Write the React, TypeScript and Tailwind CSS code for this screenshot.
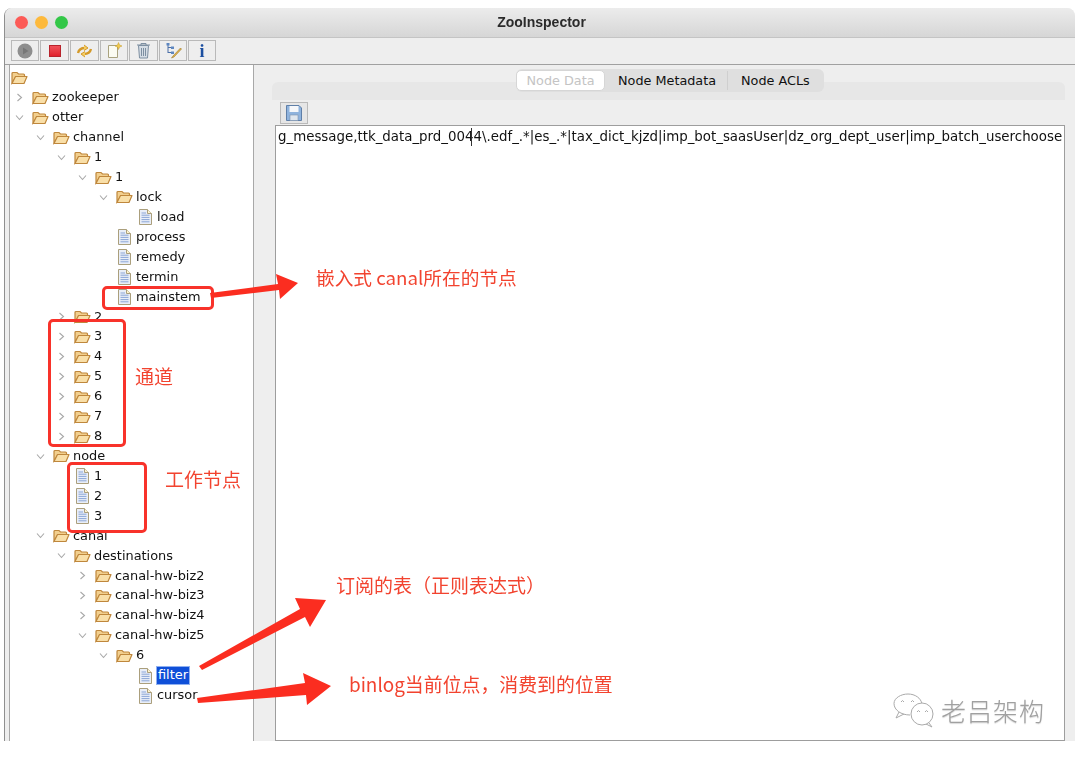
const rows: { depth: number; label: string; kind: 'open' | 'closed' | 'leaf' | 'root'; selected?: boolean }[] = [
  { depth: 0, label: '', kind: 'root' },
  { depth: 1, label: 'zookeeper', kind: 'closed' },
  { depth: 1, label: 'otter', kind: 'open' },
  { depth: 2, label: 'channel', kind: 'open' },
  { depth: 3, label: '1', kind: 'open' },
  { depth: 4, label: '1', kind: 'open' },
  { depth: 5, label: 'lock', kind: 'open' },
  { depth: 6, label: 'load', kind: 'leaf' },
  { depth: 5, label: 'process', kind: 'leaf' },
  { depth: 5, label: 'remedy', kind: 'leaf' },
  { depth: 5, label: 'termin', kind: 'leaf' },
  { depth: 5, label: 'mainstem', kind: 'leaf' },
  { depth: 3, label: '2', kind: 'closed' },
  { depth: 3, label: '3', kind: 'closed' },
  { depth: 3, label: '4', kind: 'closed' },
  { depth: 3, label: '5', kind: 'closed' },
  { depth: 3, label: '6', kind: 'closed' },
  { depth: 3, label: '7', kind: 'closed' },
  { depth: 3, label: '8', kind: 'closed' },
  { depth: 2, label: 'node', kind: 'open' },
  { depth: 3, label: '1', kind: 'leaf' },
  { depth: 3, label: '2', kind: 'leaf' },
  { depth: 3, label: '3', kind: 'leaf' },
  { depth: 2, label: 'canal', kind: 'open' },
  { depth: 3, label: 'destinations', kind: 'open' },
  { depth: 4, label: 'canal-hw-biz2', kind: 'closed' },
  { depth: 4, label: 'canal-hw-biz3', kind: 'closed' },
  { depth: 4, label: 'canal-hw-biz4', kind: 'closed' },
  { depth: 4, label: 'canal-hw-biz5', kind: 'open' },
  { depth: 5, label: '6', kind: 'open' },
  { depth: 6, label: 'filter', kind: 'leaf', selected: true },
  { depth: 6, label: 'cursor', kind: 'leaf' },
];

function FolderIcon() {
  return (
    <svg width="17" height="14" viewBox="0 0 17 14" className="shrink-0">
      <path d="M1 12V2.500C1 1.800 1.500 1.500 2 1.500H6L7.500 3H12.500C13 3 13.500 3.400 13.500 4V5.500H5L1 12Z" fill="#f2cf8e" stroke="#bf873c" strokeWidth="1.200" />
      <path d="M1 12.500L4.500 5.500H16L13 12.500H1Z" fill="#f9dfa8" stroke="#bf873c" strokeWidth="1.200" strokeLinejoin="round" />
    </svg>
  );
}

function FileIcon() {
  return (
    <svg width="13" height="16" viewBox="0 0 13 16" className="shrink-0">
      <path d="M0.500 0.500H8.500L12.500 4.500V15.500H0.500V0.500Z" fill="#e9eef8" stroke="#ab9f7c" />
      <path d="M8.500 0.500V4.500H12.500" fill="#fdf3d0" stroke="#ab9f7c" />
      <path d="M2.500 4H7M2.500 6.200H10.500M2.500 8.400H10.500M2.500 10.600H10.500M2.500 12.800H10.500" stroke="#8ba5d6" strokeWidth="1" />
    </svg>
  );
}

function Chevron({ open }: { open: boolean }) {
  return (
    <svg width="9" height="9" viewBox="0 0 9 9" className="shrink-0" fill="none" stroke="#a8a8a8" strokeWidth="1.100">
      {open ? <path d="M1 2.500L4.500 6.500L8 2.500" /> : <path d="M2.500 1L6.500 4.500L2.500 8" />}
    </svg>
  );
}

function TreeRow({ depth, label, kind, selected }: (typeof rows)[number]) {
  const left = 1 + depth * 21;
  return (
    <div className="relative flex h-[19.93px] items-center" style={{ paddingLeft: left }}>
      {(kind === 'open' || kind === 'closed') && (
        <span className="absolute top-[5px]" style={{ left: left - 17 }}>
          <Chevron open={kind === 'open'} />
        </span>
      )}
      {kind === 'leaf' ? (
        <span className="ml-[2px] mr-[5px] flex">
          <FileIcon />
        </span>
      ) : (
        <span className="mr-[3px] flex">
          <FolderIcon />
        </span>
      )}
      {label &&
        (selected ? (
          <span className="-ml-[1px] flex h-[19px] items-center border border-[#8fb0f0] bg-[#0f4fd8] px-[1px] text-white">{label}</span>
        ) : (
          <span>{label}</span>
        ))}
    </div>
  );
}

function ToolButton({ children, w }: { children: React.ReactNode; w: string }) {
  return <div className={`flex h-[21px] items-center justify-center border border-[#b9b9b9] bg-[#eeeeee] ${w}`}>{children}</div>;
}

function Toolbar() {
  return (
    <div className="flex h-[27px] shrink-0 items-start gap-px border-b border-[#a0a0a0] bg-[#eeeeee] pl-[6px] pt-[2px]">
      <ToolButton w="w-[28px]">
        <svg width="16" height="16" viewBox="0 0 16 16">
          <circle cx="8" cy="8" r="7.500" fill="#8e8e8e" />
          <path d="M6 4.500L11.500 8L6 11.500Z" fill="#777777" />
        </svg>
      </ToolButton>
      <ToolButton w="w-[29px]">
        <div className="h-[12px] w-[12px] border border-[#b8242c] bg-gradient-to-b from-[#f0505a] to-[#e0202c]" />
      </ToolButton>
      <ToolButton w="w-[29px]">
        <svg width="17" height="16" viewBox="0 0 17 16" fill="none" stroke="#d49a2a" strokeWidth="2.400">
          <path d="M2 10C3 6 6 5 9 5" />
          <path d="M8 2L12 5L8 7.500" fill="#f4cd63" strokeWidth="1" />
          <path d="M15 6C14 10 11 11 8 11" />
          <path d="M9 8.500L5 11L9 14" fill="#f4cd63" strokeWidth="1" />
        </svg>
      </ToolButton>
      <ToolButton w="w-[28px]">
        <svg width="17" height="17" viewBox="0 0 17 17">
          <path d="M2.500 3.500H11.500V15.500H2.500Z" fill="#fbfbf2" stroke="#a9a27f" />
          <path d="M12.500 0.500L13.500 3L16 4L13.500 5L12.500 7.500L11.500 5L9 4L11.500 3Z" fill="#f2cb4f" stroke="#c49a28" strokeWidth="0.500" />
        </svg>
      </ToolButton>
      <ToolButton w="w-[29px]">
        <svg width="15" height="17" viewBox="0 0 15 17" fill="#d5dde5" stroke="#7d8fa1">
          <path d="M1 3H14M5 3V1.500H10V3" fill="none" />
          <path d="M2.500 3.500H12.500L11.500 16H3.500Z" />
          <path d="M5.500 6V14M7.500 6V14M9.500 6V14" fill="none" />
        </svg>
      </ToolButton>
      <ToolButton w="w-[28px]">
        <svg width="17" height="17" viewBox="0 0 17 17" fill="none">
          <path d="M3 1.500V11M3 5.500H6M3 10.500H6" stroke="#4a6fa8" />
          <rect x="1.500" y="1" width="3" height="2.500" fill="#5d86c0" />
          <rect x="6" y="4.500" width="3" height="2.500" fill="#5d86c0" />
          <rect x="6" y="9.500" width="3" height="2.500" fill="#5d86c0" />
          <path d="M15.500 6L8 14L6.500 16L9 15L16.500 7Z" fill="#e3b34c" stroke="#9a7a2c" strokeWidth="0.600" />
        </svg>
      </ToolButton>
      <ToolButton w="w-[28px]">
        <span className="font-['Liberation_Serif',serif] text-[18px] leading-none font-bold text-[#1c4fa0]">i</span>
      </ToolButton>
    </div>
  );
}

function TreePanel() {
  return (
    <div className="w-[245px] shrink-0 overflow-hidden border-x border-[#a8a8a8] bg-white pt-[3px] font-['DejaVu_Sans',sans-serif] text-[12.900px] leading-none text-[#111111]">
      {rows.map((row, i) => (
        <TreeRow key={i} {...row} />
      ))}
    </div>
  );
}

function DetailPanel() {
  return (
    <div className="flex min-w-0 flex-1 flex-col pl-[18px] pr-[10px] pt-[17px]">
      <div className="relative flex min-h-0 flex-1 flex-col">
        <div className="absolute -top-[13px] left-[244px] z-10 flex h-[23px] w-[308px] items-center rounded-[6px] bg-[#dfdfdf] font-['DejaVu_Sans',sans-serif] text-[12.800px] text-[#111111]">
          <div className="flex h-[21px] w-[89px] items-center justify-center rounded-[5px] border border-[#d6d6d6] bg-white text-[#c4c4c4]">Node Data</div>
          <div className="w-[123px] border-r border-[#cfcfcf] pl-[13px]">Node Metadata</div>
          <div className="pl-[13px]">Node ACLs</div>
        </div>
        <div className="h-[18px] shrink-0 rounded-t-[6px] bg-[#e7e7e7]" />
        <div className="flex min-h-0 flex-1 flex-col pl-[3px]">
          <div className="flex h-[25px] shrink-0 items-end pb-px pl-[5px]">
            <div className="flex h-[22px] w-[28px] items-center justify-center border border-[#b9b9b9] bg-[#e6e6e6]">
              <svg width="16" height="16" viewBox="0 0 16 16">
                <path d="M0.500 0.500H13L15.500 3V15.500H0.500Z" fill="#8fb3dd" stroke="#5f7fa8" />
                <rect x="3.500" y="1" width="9" height="6" fill="#f5f7fa" />
                <rect x="4" y="10" width="8" height="5.500" fill="#dfe6ee" stroke="#7f93ad" strokeWidth="0.600" />
              </svg>
            </div>
          </div>
          <div className="relative min-h-0 flex-1 overflow-hidden border border-[#9d9d9d] bg-white pl-[2px] pt-[1px] font-['DejaVu_Sans',sans-serif] text-[13.370px] whitespace-nowrap text-[#111111]">
            g_message,ttk_data_prd_0044\.edf_.*|es_.*|tax_dict_kjzd|imp_bot_saasUser|dz_org_dept_user|imp_batch_userchoose
            <div className="absolute top-[2px] left-[195px] h-[18px] w-px bg-[#333333]" />
          </div>
        </div>
      </div>
    </div>
  );
}

function Annotations() {
  const note = "absolute font-['Noto_Sans_CJK_SC',sans-serif] leading-none whitespace-nowrap text-[#f2432f]";
  const box = 'absolute rounded-[5px] border-[3px] border-[#f8322a]';
  return (
    <div className="absolute inset-0 blur-[0.4px]">
      <div className={`${box} top-[286px] left-[102px] h-[24px] w-[112px]`} />
      <div className={`${box} top-[319px] left-[48px] h-[128px] w-[78px]`} />
      <div className={`${box} top-[462px] left-[67px] h-[71px] w-[80px]`} />
      <svg className="absolute top-0 left-0" width="1080" height="758" viewBox="0 0 1080 758" fill="#fb2d20">
        <path d="M210 293L278 284L276 274L298 283L280 299L279 290L211 298Z" />
        <path d="M199 666L300 609L295 598L326 600L310 627L305 617L202 670Z" />
        <path d="M197 698L305 683L303 673L331 686L307 705L306 695L198 703Z" />
      </svg>
      <div className={`${note} top-[268px] left-[316px] text-[18.700px]`}>嵌入式 canal所在的节点</div>
      <div className={`${note} top-[366px] left-[135px] text-[19px]`}>通道</div>
      <div className={`${note} top-[469px] left-[165px] text-[19px]`}>工作节点</div>
      <div className={`${note} top-[575px] left-[336px] text-[19px]`}>订阅的表（正则表达式）</div>
      <div className={`${note} top-[675px] left-[349px] text-[18.900px]`}>binlog当前位点，消费到的位置</div>
      <svg className="absolute top-[693px] left-[893px]" width="44" height="36" viewBox="0 0 44 36" fill="none" stroke="#a9a9a9" strokeWidth="1">
        <path d="M17 22C8 22 1 17 1 10.500C1 5 8 1 15 1C22 1 28 5 29 11" />
        <path d="M6 19L3 25L11 21" />
        <circle cx="29" cy="21" r="11" fill="#ffffff" />
        <path d="M36 30L39 34L33 31" />
        <path d="M8 9l1.500-1.500 1.500 1.500M18 9l1.500-1.500 1.500 1.500M24 19l1.500-1.500 1.500 1.500M32 19l1.500-1.500 1.500 1.500" />
      </svg>
      <div className="absolute top-[695px] left-[941px] font-['Noto_Sans_CJK_SC',sans-serif] text-[25px] leading-[30px] font-light tracking-[1px] whitespace-nowrap text-[#a0a0a0] [text-shadow:0_1px_1px_#d8d8d8]">
        老吕架构
      </div>
    </div>
  );
}

export default function App() {
  return (
    <div className="relative h-[758px] w-[1080px] overflow-hidden bg-white">
      <div className="h-[741px] pt-[8px] pl-[4px] pr-[5px]">
        <div className="flex h-full flex-col overflow-hidden rounded-t-[8px] border-l border-[#8f8f8f] bg-[#eeeeee] blur-[0.5px]">
          <div className="relative flex h-[30px] shrink-0 items-center border-b border-[#c4c4c4] bg-gradient-to-b from-[#ececec] to-[#d6d6d6] pl-[10px]">
            <div className="flex gap-[7px]">
              <div className="h-[13px] w-[13px] rounded-full bg-[#fc5b57]" />
              <div className="h-[13px] w-[13px] rounded-full bg-[#fdb93c]" />
              <div className="h-[13px] w-[13px] rounded-full bg-[#33c748]" />
            </div>
            <div className="flex-1 pr-[60px] text-center font-['Liberation_Sans',sans-serif] text-[14px] font-bold text-[#2b2b2b]">ZooInspector</div>
          </div>
          <Toolbar />
          <div className="flex min-h-0 flex-1 pl-[4px]">
            <TreePanel />
            <DetailPanel />
          </div>
        </div>
      </div>
      <Annotations />
    </div>
  );
}
